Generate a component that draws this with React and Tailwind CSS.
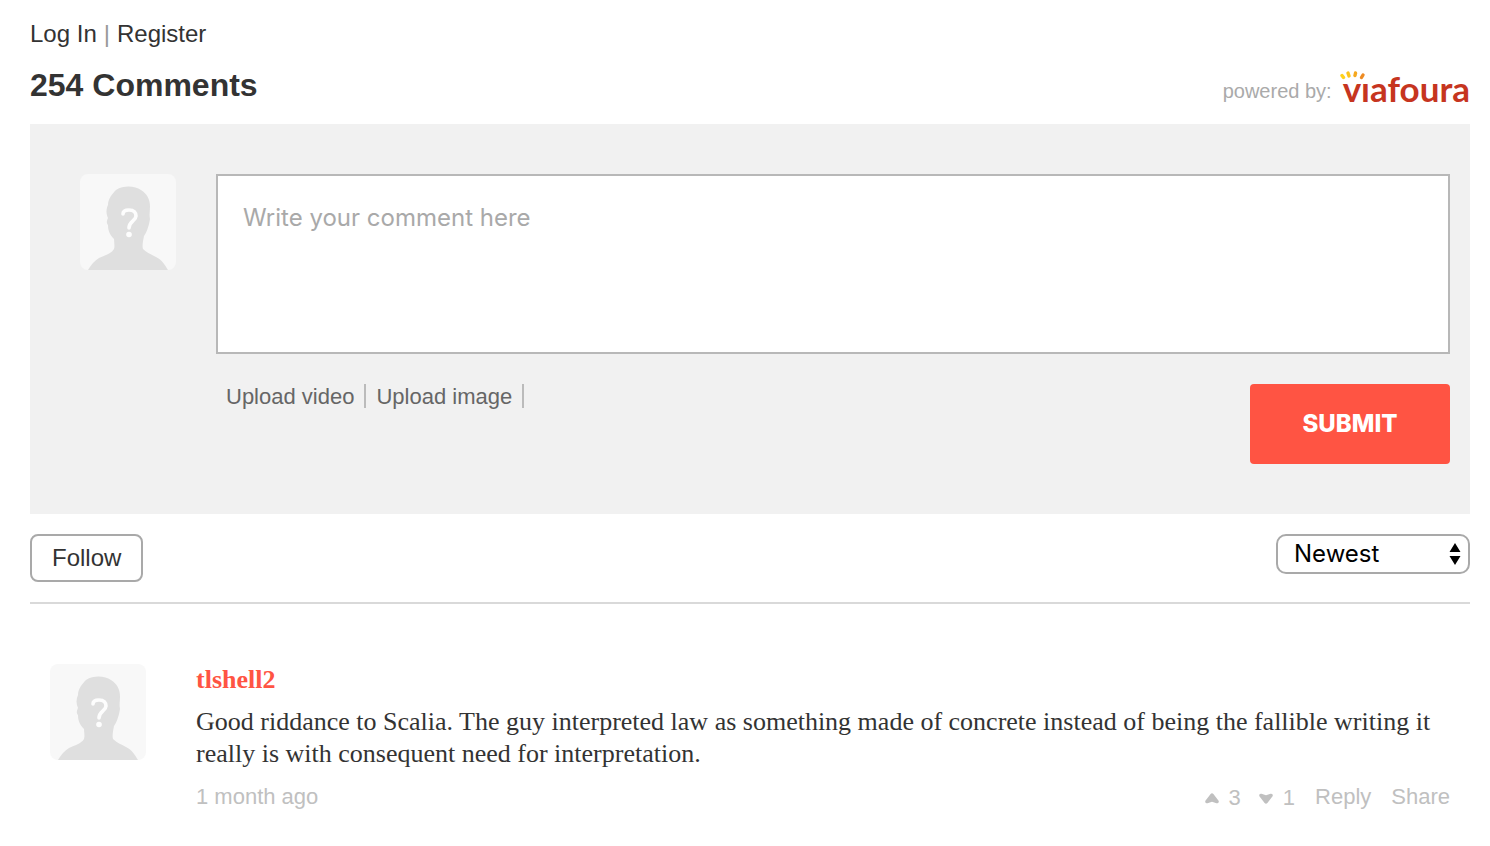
function Avatar() {
  return (
    <svg viewBox="0 0 96 96" className="size-24 shrink-0 rounded-lg bg-[#f8f8f8]" role="img" aria-label="Anonymous user">
      <path
        fill="#dfdfdf"
        d="M8 96C11 91 14 87 19 84C25 81 31 80 34 75C35 72 34 68 34 65C30 61 28 57 28 51C26 49 27 46 28 44C26 40 26 35 28 31C28 25 32 20 36 16C44 11 55 12 61 16C67 20 70 25 70 33C70 37 69 41 70 45C69 51 67 58 64 62C63 67 62 72 63 75C67 79 71 80 76 83C82 86 85 91 88 96Z"
      />
      <path fill="none" stroke="#fdfdfd" strokeWidth="3.600" strokeLinecap="round" strokeLinejoin="round" d="M43 40C43 37 46 36 49 36C54 36 56 39 56 42C56 47 49 47 49 54" />
      <circle cx="49" cy="60.500" r="2.800" fill="#fdfdfd" />
    </svg>
  );
}

function Logo() {
  return (
    <a href="#viafoura" aria-label="viafoura" className="relative mt-[3px] block h-9 pl-[3px] font-[Lato,sans-serif] text-[35px] leading-9 font-bold text-[#c6351f]">
      <svg viewBox="0 0 26 12" className="absolute top-0 left-0 h-3 w-[26px]" aria-hidden="true">
        <g strokeWidth="3.400" strokeLinecap="round">
          <path stroke="#ffd21c" d="M2 5.500L3.500 7.500" />
          <path stroke="#fcc41c" d="M8 3L9 6" />
          <path stroke="#f5a81f" d="M15.500 3L15 5.500" />
          <path stroke="#ee8b22" d="M23 5L21.500 7.500" />
        </g>
      </svg>
      vıafoura
    </a>
  );
}

export default function App() {
  return (
    <main className="px-5 py-4 pl-[30px] font-['Liberation_Sans',Arial,sans-serif] text-[#333]">
      <nav className="flex gap-[7px] text-2xl leading-9" aria-label="Account">
        <a href="#login">Log In</a>
        <span className="text-[#999]">|</span>
        <a href="#register">Register</a>
      </nav>

      <header className="mt-[15px] flex items-start justify-between">
        <h1 className="text-[32px] leading-9 font-bold">254 Comments</h1>
        <div className="flex items-start gap-2 text-xl text-[#aaa]">
          <span className="pt-2.5">powered by:</span>
          <Logo />
        </div>
      </header>

      <form className="mt-[18px] flex h-[390px] gap-10 bg-[#f1f1f1] py-[50px] pr-5 pl-[50px]" onSubmit={(e) => e.preventDefault()}>
        <Avatar />
        <div className="flex-1">
          <textarea
            aria-label="Write your comment here"
            placeholder="Write your comment here"
            className="block h-[180px] w-full resize-none rounded-none border-2 border-[#b8b8b8] bg-white px-[25px] py-6 font-[Inter,sans-serif] text-2xl leading-9 outline-none placeholder:text-[#a9a9a9]"
          />
          <div className="mt-[30px] flex items-start justify-between">
            <div className="flex text-[22px] leading-6 text-[#666] [text-shadow:0_2px_0_#fff]">
              <button type="button" className="h-6 border-r-2 border-[#bbb] px-[10px] leading-[26px]">Upload video</button>
              <button type="button" className="h-6 border-r-2 border-[#bbb] px-[10px] leading-[26px]">Upload image</button>
            </div>
            <button type="submit" className="h-20 w-[200px] rounded-sm bg-[#ff5443] font-[Inter,sans-serif] text-2xl font-extrabold text-white">SUBMIT</button>
          </div>
        </div>
      </form>

      <div className="mt-5 flex items-start justify-between border-b-2 border-[#d9d9d9] pb-5">
        <button type="button" className="h-12 rounded-lg border-2 border-[#a9a9a9] px-5 text-2xl">Follow</button>
        <div className="relative">
          <select aria-label="Sort comments" className="h-10 w-[194px] appearance-none rounded-[10px] border-2 border-[#a9a9a9] bg-white px-4 font-[Inter,sans-serif] text-2xl leading-8 text-black">
            <option>Newest</option>
            <option>Oldest</option>
          </select>
          <svg viewBox="0 0 12 22" className="pointer-events-none absolute top-[9px] right-[9px] h-[22px] w-3" aria-hidden="true">
            <path d="M6 0L11.500 9H0.500ZM6 22L11.500 13H0.500Z" />
          </svg>
        </div>
      </div>

      <article className="mt-[60px] flex gap-[50px] pr-5 pl-5">
        <Avatar />
        <div className="flex-1">
          <h2 className="font-['Liberation_Serif',serif] text-[26px] leading-8 font-bold text-[#ff5443]">tlshell2</h2>
          <p className="mt-[10px] font-['Liberation_Serif',serif] text-[26px] leading-8">
            Good riddance to Scalia. The guy interpreted law as something made of concrete instead of being the fallible writing it really is with consequent need for interpretation.
          </p>
          <footer className="mt-2.5 flex items-center justify-between text-[22px] leading-8 text-[#c0c0c0]">
            <time>1 month ago</time>
            <div className="flex items-center gap-5">
              <div className="flex items-center gap-[18px] pt-0.5">
                <button type="button" aria-label="Vote up, 3" className="flex items-center gap-[10px]">
                  <svg viewBox="0 0 14 11" className="h-[11px] w-[14px]" fill="currentColor" aria-hidden="true">
                    <path d="M7 0.300Q7.800 0.300 8.400 1L13.600 7.800Q14.200 9.200 13 10Q12.300 10.500 11.500 10.200L7 8.700L2.500 10.200Q1.700 10.500 1 10Q-0.200 9.200 0.400 7.800L5.600 1Q6.200 0.300 7 0.300Z" />
                  </svg>
                  3
                </button>
                <button type="button" aria-label="Vote down, 1" className="flex items-center gap-[10px]">
                  <svg viewBox="0 0 14 11" className="h-[11px] w-[14px]" fill="currentColor" aria-hidden="true">
                    <path d="M7 10.700Q7.800 10.700 8.400 10L13.600 3.200Q14.200 1.800 13 1Q12.300 0.500 11.500 0.800L7 2.300L2.500 0.800Q1.700 0.500 1 1Q-0.200 1.800 0.400 3.200L5.600 10Q6.200 10.700 7 10.700Z" />
                  </svg>
                  1
                </button>
              </div>
              <button type="button">Reply</button>
              <button type="button">Share</button>
            </div>
          </footer>
        </div>
      </article>
    </main>
  );
}
